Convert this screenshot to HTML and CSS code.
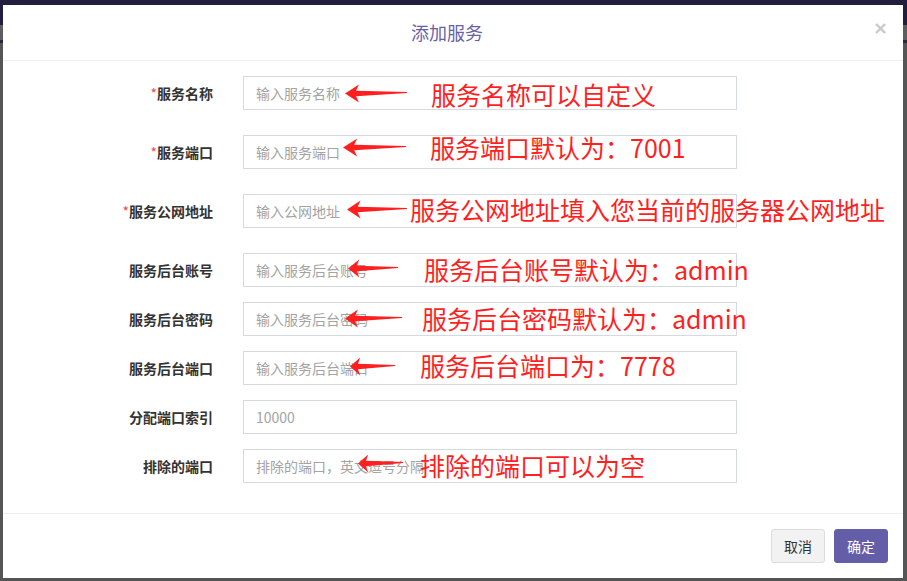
FILE: index.html
```html
<!DOCTYPE html>
<html lang="zh-CN">
<head>
<meta charset="utf-8">
<title>添加服务</title>
<link rel="stylesheet" href="styles.css">
</head>
<body>
<svg width="0" height="0" class="defs">
  <defs>
    <symbol id="arrow" viewBox="0 0 62 20" preserveAspectRatio="none">
      <path d="M0 10 L14 0.5 L11 7.2 L62 8.3 L62 9.6 L11 12.8 L14 19.5 Z" fill="#ff1f1f"/>
    </symbol>
  </defs>
</svg>
<div class="modal">
  <div class="modal-header">
    <span class="modal-title">添加服务</span>
    <span class="modal-close">×</span>
  </div>
  <div class="modal-body">
    <div class="row req">
      <label class="lbl"><i>*</i>服务名称</label>
      <div class="input"><span class="ph">输入服务名称</span></div>
      <div class="note n1"><svg class="arw" style="width:62px"><use href="#arrow"/></svg><span>服务名称可以自定义</span></div>
    </div>
    <div class="row req">
      <label class="lbl"><i>*</i>服务端口</label>
      <div class="input"><span class="ph">输入服务端口</span></div>
      <div class="note n2"><svg class="arw" style="width:63px"><use href="#arrow"/></svg><span>服务端口默认为：7001</span></div>
    </div>
    <div class="row req">
      <label class="lbl"><i>*</i>服务公网地址</label>
      <div class="input"><span class="ph">输入公网地址</span></div>
      <div class="note n3"><svg class="arw" style="width:60px"><use href="#arrow"/></svg><span>服务公网地址填入您当前的服务器公网地址</span></div>
    </div>
    <div class="row">
      <label class="lbl">服务后台账号</label>
      <div class="input"><span class="ph">输入服务后台账号</span></div>
      <div class="note n4"><svg class="arw" style="width:50px"><use href="#arrow"/></svg><span>服务后台账号默认为：admin</span></div>
    </div>
    <div class="row">
      <label class="lbl">服务后台密码</label>
      <div class="input"><span class="ph">输入服务后台密码</span></div>
      <div class="note n5"><svg class="arw" style="width:57px"><use href="#arrow"/></svg><span>服务后台密码默认为：admin</span></div>
    </div>
    <div class="row">
      <label class="lbl">服务后台端口</label>
      <div class="input"><span class="ph">输入服务后台端口</span></div>
      <div class="note n6"><svg class="arw" style="width:45px"><use href="#arrow"/></svg><span>服务后台端口为：7778</span></div>
    </div>
    <div class="row">
      <label class="lbl">分配端口索引</label>
      <div class="input"><span class="ph">10000</span></div>
    </div>
    <div class="row">
      <label class="lbl">排除的端口</label>
      <div class="input"><span class="ph">排除的端口，英文逗号分隔</span></div>
      <div class="note n8"><svg class="arw" style="width:45px"><use href="#arrow"/></svg><span>排除的端口可以为空</span></div>
    </div>
  </div>
  <div class="modal-footer">
    <button class="btn btn-cancel">取消</button>
    <button class="btn btn-ok">确定</button>
  </div>
</div>
</body>
</html>
```

FILE: styles.css
```css
html, body {
  margin: 0;
  padding: 0;
  width: 907px;
  height: 581px;
  overflow: hidden;
}
body {
  background:
    linear-gradient(to bottom,
      #221e3e 0, #221e3e 25px,
      #5e5e5e 25px, #5e5e5e 40px,
      #2b2742 40px, #2b2742 43px,
      #555555 43px, #555555 100%);
  font-family: "Noto Sans CJK SC", "Noto Sans", sans-serif;
  padding-top: 5px;
  padding-left: 3px;
  box-sizing: border-box;
}
.defs { position: absolute; }
.modal {
  width: 900px;
  height: 573px;
  background: #fff;
  display: flex;
  flex-direction: column;
}
.modal-header {
  height: 55px;
  border-bottom: 1px solid #eeeeee;
  display: flex;
  align-items: center;
  justify-content: center;
  position: relative;
}
.modal-title {
  font-size: 18px;
  color: #6a5fa6;
  margin-top: -1px;
  margin-right: 12px;
}
.modal-close {
  position: absolute;
  right: 15px;
  top: 14px;
  font-size: 18px;
  line-height: 18px;
  font-weight: bold;
  color: #c8c8c8;
  font-family: "DejaVu Sans", sans-serif;
}
.modal-body {
  flex: 1;
  padding-top: 15px;
}
.row {
  display: flex;
  align-items: center;
  height: 34px;
  margin-bottom: 15px;
  position: relative;
}
.row.req { margin-bottom: 25px; }
.lbl {
  width: 240px;
  flex: none;
  padding-right: 30px;
  box-sizing: border-box;
  text-align: right;
  font-size: 14px;
  font-weight: bold;
  color: #333;
}
.lbl i {
  font-style: normal;
  font-weight: normal;
  color: #ed4b4b;
}
.input {
  width: 494px;
  height: 34px;
  flex: none;
  box-sizing: border-box;
  border: 1px solid #d5d9e1;
  display: flex;
  align-items: center;
  padding-left: 12px;
}
.ph {
  font-size: 14px;
  color: #a3a3a3;
}
.note {
  position: absolute;
  top: 0;
  height: 34px;
  display: flex;
  align-items: center;
  color: #ff1f1f;
  font-size: 25px;
  white-space: nowrap;
}
.note .arw {
  height: 19px;
  flex: none;
  position: relative;
  top: 2px;
}
.note span { position: relative; top: 2px; }
.n1 { left: 342px; top: -1px; }
.n1 .arw { margin-right: 24px; top: 1px; }
.n2 { left: 340px; top: -7px; }
.n2 .arw { margin-right: 24px; }
.n3 { left: 344px; top: -4px; }
.n3 .arw { margin-right: 3px; }
.n4 { left: 345px; top: -3px; }
.n4 .arw { margin-right: 26px; top: 1px; }
.n5 { left: 342px; top: -3px; }
.n5 .arw { margin-right: 20px; }
.n6 { left: 347px; top: -5px; }
.n6 .arw { margin-right: 25px; top: 3px; }
.n8 { left: 355px; top: -3px; }
.n8 .arw { margin-right: 17px; top: 0; }
.modal-footer {
  border-top: 1px solid #eeeeee;
  padding: 15px 15px 15px 0;
  display: flex;
  justify-content: flex-end;
  gap: 9px;
}
.btn {
  width: 54px;
  height: 34px;
  border-radius: 3px;
  font-family: "Noto Sans CJK SC", "Noto Sans", sans-serif;
  font-size: 14px;
  padding: 0;
  cursor: pointer;
}
.btn-cancel {
  background: #f2f2f2;
  border: 1px solid #dcdcdc;
  color: #333;
}
.btn-ok {
  background: #645ea8;
  border: 1px solid #645ea8;
  color: #fff;
}
```
